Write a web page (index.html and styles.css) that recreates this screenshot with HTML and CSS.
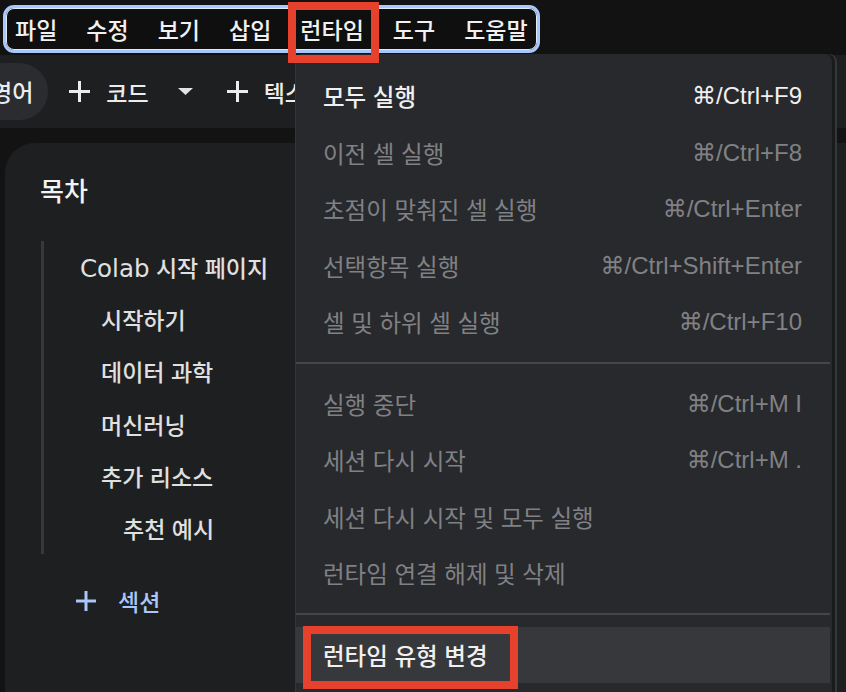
FILE: index.html
```html
<!DOCTYPE html>
<html lang="ko">
<head>
	<meta charset="UTF-8">
	<title>Colab 런타임 메뉴</title>
	<link rel="stylesheet" href="styles.css">
</head>
<body>
	<div class="app">
		<header class="top">
			<nav class="menubar">
				<span class="mitem">파일</span>
				<span class="mitem">수정</span>
				<span class="mitem">보기</span>
				<span class="mitem">삽입</span>
				<span class="mitem">런타임</span>
				<span class="mitem">도구</span>
				<span class="mitem">도움말</span>
			</nav>
		</header>

		<div class="toolbar">
			<span class="chip">영어</span>
			<span class="tbtn tbtn-code">
				<svg class="plus" width="23" height="23" viewBox="0 0 23 23"><path d="M11.5 1v21M1 11.5h21" stroke="currentColor" stroke-width="3"/></svg>
				<span>코드</span>
			</span>
			<svg class="caret" width="15" height="7" viewBox="0 0 15 7"><path d="M0 0h15L7.5 7z" fill="#e3e3e3"/></svg>
			<span class="tbtn">
				<svg class="plus" width="23" height="23" viewBox="0 0 23 23"><path d="M11.5 1v21M1 11.5h21" stroke="currentColor" stroke-width="3"/></svg>
				<span>텍스트</span>
			</span>
		</div>

		<div class="band"></div>

		<aside class="toc">
			<h2 class="toc-title">목차</h2>
			<ul class="toc-list">
				<li class="lv1"><span class="lat">Colab</span> 시작 페이지</li>
				<li class="lv2">시작하기</li>
				<li class="lv2">데이터 과학</li>
				<li class="lv2">머신러닝</li>
				<li class="lv2">추가 리소스</li>
				<li class="lv3">추천 예시</li>
			</ul>
			<div class="add-section">
				<svg width="22" height="22" viewBox="0 0 22 22"><path d="M11 1v20M1 11h20" stroke="#a8c7fa" stroke-width="3"/></svg>
				<span>섹션</span>
			</div>
		</aside>
	</div>

	<!-- 열린 런타임 메뉴 -->
	<div class="dropdown">
		<div class="row on"><span>모두 실행</span><span class="key">⌘/Ctrl+F9</span></div>
		<div class="row"><span>이전 셀 실행</span><span class="key">⌘/Ctrl+F8</span></div>
		<div class="row"><span>초점이 맞춰진 셀 실행</span><span class="key">⌘/Ctrl+Enter</span></div>
		<div class="row"><span>선택항목 실행</span><span class="key">⌘/Ctrl+Shift+Enter</span></div>
		<div class="row"><span>셀 및 하위 셀 실행</span><span class="key">⌘/Ctrl+F10</span></div>
		<div class="sep"></div>
		<div class="row"><span>실행 중단</span><span class="key">⌘/Ctrl+M I</span></div>
		<div class="row"><span>세션 다시 시작</span><span class="key">⌘/Ctrl+M .</span></div>
		<div class="row"><span>세션 다시 시작 및 모두 실행</span></div>
		<div class="row"><span>런타임 연결 해제 및 삭제</span></div>
		<div class="sep"></div>
		<div class="row on hover"><span>런타임 유형 변경</span></div>
	</div>

	<div class="mark mark-menu"></div>
	<div class="mark mark-item"></div>
</body>
</html>
```

FILE: styles.css
```css
html, body{
	margin: 0;
	height: 100%;
}
body{
	background-color: #131314;
	color: #e3e3e3;
	font-family: "Liberation Sans", "Noto Sans CJK KR", sans-serif;
	overflow: hidden;
	position: relative;
}
.app{
	display: flex;
	flex-direction: column;
	height: 692px;
}

/* 상단 메뉴바 */
.top{
	height: 55px;
	background-color: #121212;
	padding: 5px 0 0 3px;
	box-sizing: border-box;
}
.menubar{
	display: inline-flex;
	align-items: center;
	gap: 29px;
	height: 48px;
	box-sizing: border-box;
	padding: 0 9px 0 9px;
	background-color: #0f0f0f;
	border: 3px solid #a8c7fa;
	border-radius: 11px;
	box-shadow: inset 0 0 0 1px #dfe8f7;
}
.mitem{
	font-family: "Noto Sans CJK KR", sans-serif;
	font-size: 23px;
	font-weight: 500;
	color: #f1f1f1;
}

/* 툴바 */
.toolbar{
	height: 73px;
	background-color: #1e1f20;
	display: flex;
	align-items: center;
	font-family: "Noto Sans CJK KR", sans-serif;
	font-size: 23px;
	font-weight: 500;
	color: #ececec;
}
.chip{
	margin-left: -24px;
	padding: 0 15px;
	height: 57px;
	line-height: 57px;
	border-radius: 29px;
	background-color: #2b2c2f;
}
.tbtn{
	display: flex;
	align-items: center;
	gap: 15px;
	white-space: nowrap;
}
.tbtn-code{
	margin-left: 20px;
}
.caret{
	margin: 0 33px 0 29px;
	flex-shrink: 0;
}
.band{
	height: 15px;
	background-color: #131314;
}

/* 목차 */
.toc{
	flex: 1;
	margin-left: 5px;
	background-color: #1e1f20;
	border-top-left-radius: 30px;
	padding-top: 32px;
	font-family: "Noto Sans CJK KR", sans-serif;
}
.toc-title{
	margin: 0 0 36px 35px;
	font-size: 26px;
	line-height: 30px;
	font-weight: 500;
	color: #f3f3f3;
}
.toc-list{
	list-style: none;
	margin: 0 0 0 36px;
	padding: 0;
	border-left: 3px solid #37383b;
	width: 260px;
}
.toc-list li{
	height: 52.2px;
	line-height: 52px;
	font-size: 23px;
	font-weight: 500;
	color: #e0e0e0;
	white-space: nowrap;
}
.lat{
	font-family: "DejaVu Sans", sans-serif;
	font-size: 24.5px;
}
.lv1{ padding-left: 36px; }
.lv2{ padding-left: 57px; }
.lv3{ padding-left: 79px; }
.add-section{
	display: flex;
	align-items: center;
	gap: 21px;
	margin: 27px 0 0 70px;
	height: 40px;
	font-size: 23px;
	font-weight: 500;
	color: #a8c7fa;
}

/* 드롭다운 메뉴 */
.dropdown{
	position: absolute;
	left: 296px;
	top: 54px;
	width: 536px;
	height: 660px;
	padding-top: 14px;
	box-sizing: border-box;
	background-color: #28292c;
	border-radius: 8px 8px 0 0;
	box-shadow: -1px 0 0 #34353a, 3px 0 0 #1a1b1d, 5px 0 0 #36373a;
	font-family: "Noto Sans CJK KR", sans-serif;
}
.row{
	height: 56.5px;
	display: flex;
	align-items: center;
	justify-content: space-between;
	padding: 0 30px 0 27px;
	font-size: 23.5px;
	color: #808184;
}
.row.on{
	color: #f0f0f0;
	font-weight: 500;
}
.row.hover{
	background-color: #37383b;
	margin-right: 2px;
}
.key{
	font-family: "Liberation Sans", "DejaVu Sans", sans-serif;
	font-size: 24px;
	font-weight: 400;
}
.sep{
	height: 2px;
	margin: 11px 2px 12px 0;
	background-color: #45464a;
}

/* 빨간 강조 표시 */
.mark{
	position: absolute;
	border: 8px solid #e5412d;
	box-sizing: border-box;
}
.mark-menu{
	left: 288px;
	top: 2px;
	width: 91px;
	height: 61px;
}
.mark-item{
	left: 303px;
	top: 626px;
	width: 215px;
	height: 63px;
}
```
